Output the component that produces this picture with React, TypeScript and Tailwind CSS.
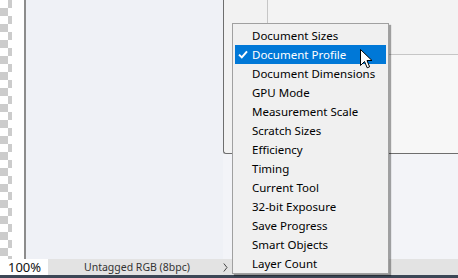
const items = [
  "Document Sizes",
  "Document Profile",
  "Document Dimensions",
  "GPU Mode",
  "Measurement Scale",
  "Scratch Sizes",
  "Efficiency",
  "Timing",
  "Current Tool",
  "32-bit Exposure",
  "Save Progress",
  "Smart Objects",
  "Layer Count",
];

const font = { fontFamily: '"Noto Sans", "Open Sans", sans-serif' };

export default function App() {
  return (
    <div
      className="relative w-[458px] h-[278px] flex flex-col overflow-hidden bg-[#eef0f5]"
      style={font}
    >
      <div className="flex h-[259px]">
        <div className="w-[12px] bg-white bg-[conic-gradient(#cccccc_25%,#ffffff_0_50%,#cccccc_0_75%,#ffffff_0)] bg-[length:16px_16px]" />
        <div className="w-[12px] bg-white" />
        <div className="w-[2px] bg-[#8c8c8c]" />
        <div className="flex-1 flex bg-[#eff1f6]">
          <div className="w-[197px]" />
          <div className="flex-1 flex flex-col">
            <div className="h-[154px] flex border-l-[1.5px] border-b-[1.5px] border-[#6e6e6e] rounded-bl-[3px] bg-[#f2f2f2]">
              <div className="w-[43px]" />
              <div className="flex-1 flex flex-col">
                <div className="h-[55px] border-l border-b border-[#c6c6c6] bg-[#f3f3f3]" />
                <div className="flex-1 bg-[#f7f7f7]" />
              </div>
            </div>
            <div className="flex-1 bg-[#f3f4f8]" />
          </div>
        </div>
      </div>

      <div className="h-[16px] flex items-center bg-[#e3e3e3] text-[#111]">
        <div className="w-[48px] h-full bg-white pl-[8px] leading-[16px] text-[13px]">100%</div>
        <div className="w-[175px] pl-[36px] text-[10.5px] text-[#333] leading-[16px]">Untagged RGB (8bpc)</div>
        <svg width="5" height="9" viewBox="0 0 5 9">
          <path d="M0.8 0.5 L4 4.5 L0.8 8.5" fill="none" stroke="#444" strokeWidth="1" />
        </svg>
      </div>
      <div className="h-[3px] bg-[#3c4756]" />

      <div className="absolute left-[232px] top-[23px] w-[157px] h-[251px] p-[2px] bg-[#f0f0f0] border border-[#a0a0a0] shadow-[2px_2px_1px_rgba(0,0,0,0.35)]">
        {items.map((t, i) => {
          const on = i === 1;
          return (
            <div
              key={t}
              className={`relative h-[19px] pl-[17px] flex items-center text-[11.5px] ${
                on ? "bg-[#0078d7] text-white" : "text-black"
              }`}
            >
              {on && (
                <svg className="absolute left-[3px] top-[5px]" width="10" height="9" viewBox="0 0 10 9">
                  <path d="M1 4.6 L3.8 7.4 L9 1.4" fill="none" stroke="white" strokeWidth="2" />
                </svg>
              )}
              {t}
            </div>
          );
        })}
      </div>

      <svg className="absolute left-[360px] top-[49px]" width="13" height="21" viewBox="0 0 13 21">
        <path
          d="M0.5 0.5 L0.5 16.5 L4.5 12.5 L7.2 18.8 L9.6 17.8 L7 11.5 L12 11.5 Z"
          fill="white"
          stroke="black"
          strokeWidth="1"
          strokeLinejoin="round"
        />
      </svg>
    </div>
  );
}
